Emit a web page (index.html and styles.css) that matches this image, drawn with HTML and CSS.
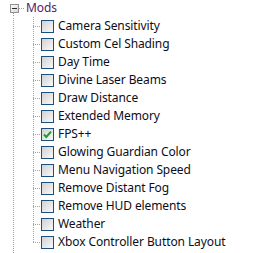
FILE: index.html
```html
<!DOCTYPE html>
<html lang="en">

<head>
    <meta charset="UTF-8">
    <title>Mods</title>
    <link rel="stylesheet" href="styles.css">
</head>

<body>

    <ul class="tree">
        <li>
            <!-- Root node: expanded folder without a checkbox -->
            <div class="row root-row">
                <span class="guide root-guide">
                    <svg class="expander" width="9" height="9" viewBox="0 0 9 9">
                        <defs>
                            <linearGradient id="exp-fill" x1="0" y1="0" x2="1" y2="1">
                                <stop offset="0" stop-color="#ffffff" />
                                <stop offset="1" stop-color="#d4d4d4" />
                            </linearGradient>
                        </defs>
                        <rect x="0.5" y="0.5" width="8" height="8" fill="url(#exp-fill)" stroke="#919191" />
                        <line x1="2" y1="4.5" x2="7" y2="4.5" stroke="#2a2a2a" />
                    </svg>
                </span>
                <span class="label root-label">Mods</span>
            </div>

            <ul class="children" id="mod-list"></ul>
        </li>
    </ul>

    <script>
        const mods = [
            { name: 'Camera Sensitivity', checked: false },
            { name: 'Custom Cel Shading', checked: false },
            { name: 'Day Time', checked: false },
            { name: 'Divine Laser Beams', checked: false },
            { name: 'Draw Distance', checked: false },
            { name: 'Extended Memory', checked: false },
            { name: 'FPS++', checked: true },
            { name: 'Glowing Guardian Color', checked: false },
            { name: 'Menu Navigation Speed', checked: false },
            { name: 'Remove Distant Fog', checked: false },
            { name: 'Remove HUD elements', checked: false },
            { name: 'Weather', checked: false },
            { name: 'Xbox Controller Button Layout', checked: false }
        ];

        function checkboxSvg(checked) {
            const tick = checked
                ? '<path d="M3 6.5 L5.3 9 L10 3.6" fill="none" stroke="#1f9e2a" stroke-width="2" />'
                : '';
            return `
                <svg class="checkbox" width="13" height="13" viewBox="0 0 13 13">
                    <rect x="0.5" y="0.5" width="12" height="12" fill="url(#box-fill)" stroke="#1d4f7c" />
                    ${tick}
                </svg>`;
        }

        // Build the child rows of the Mods node
        const list = document.getElementById('mod-list');
        mods.forEach((mod, i) => {
            const item = document.createElement('li');
            const last = i === mods.length - 1 ? ' last' : '';
            item.innerHTML = `
                <div class="row">
                    <span class="guide child-guide${last}"></span>
                    ${checkboxSvg(mod.checked)}
                    <span class="label">${mod.name}</span>
                </div>`;
            list.appendChild(item);
        });
    </script>

    <!-- shared gradient for the checkboxes -->
    <svg width="0" height="0" class="defs">
        <defs>
            <linearGradient id="box-fill" x1="0" y1="0" x2="1" y2="1">
                <stop offset="0" stop-color="#cfcfcf" />
                <stop offset="1" stop-color="#fbfbfb" />
            </linearGradient>
        </defs>
    </svg>

</body>

</html>
```

FILE: styles.css
```css
body {
    margin: 0;
    background-color: #fff;
    font-family: 'Noto Sans', 'Open Sans', sans-serif;
    font-size: 12px;
    letter-spacing: -0.1px;
    color: #0d0d1a;
    overflow: hidden;
}

ul {
    list-style: none;
    margin: 0;
    padding: 0;
}

.tree {
    margin-top: -1px;
}

.row {
    display: flex;
    align-items: center;
    height: 18px;
}

.label {
    line-height: 18px;
    white-space: nowrap;
}

/* Dotted guide lines */
.guide {
    display: flex;
    align-items: center;
    justify-content: center;
    height: 18px;
    flex-shrink: 0;
}

.root-guide {
    width: 20px;
    margin-left: 4px;
    background:
        repeating-linear-gradient(#a0a0a0 0 1px, transparent 1px 2px) 9px 10px / 1px 8px no-repeat,
        repeating-linear-gradient(to right, #a0a0a0 0 1px, transparent 1px 2px) 9px 9px / 11px 1px no-repeat;
}

.root-label {
    margin-left: 2px;
    color: #5a2062;
}

.children {
    padding-bottom: 6px;
    background: linear-gradient(#a0a0a0 50%, transparent 50%) 13px 1px / 1px 2px repeat-y;
}

.child-guide {
    width: 18px;
    margin-left: 23px;
    background:
        linear-gradient(#a0a0a0 50%, transparent 50%) 10px 0 / 1px 2px repeat-y,
        repeating-linear-gradient(to right, #a0a0a0 0 1px, transparent 1px 2px) 10px 9px / 8px 1px no-repeat;
}

.child-guide.last {
    background:
        repeating-linear-gradient(#a0a0a0 0 1px, transparent 1px 2px) 10px 0 / 1px 10px no-repeat,
        repeating-linear-gradient(to right, #a0a0a0 0 1px, transparent 1px 2px) 10px 9px / 8px 1px no-repeat;
}

.checkbox {
    display: block;
    flex-shrink: 0;
    margin-right: 4px;
}

.defs {
    position: absolute;
}
```
